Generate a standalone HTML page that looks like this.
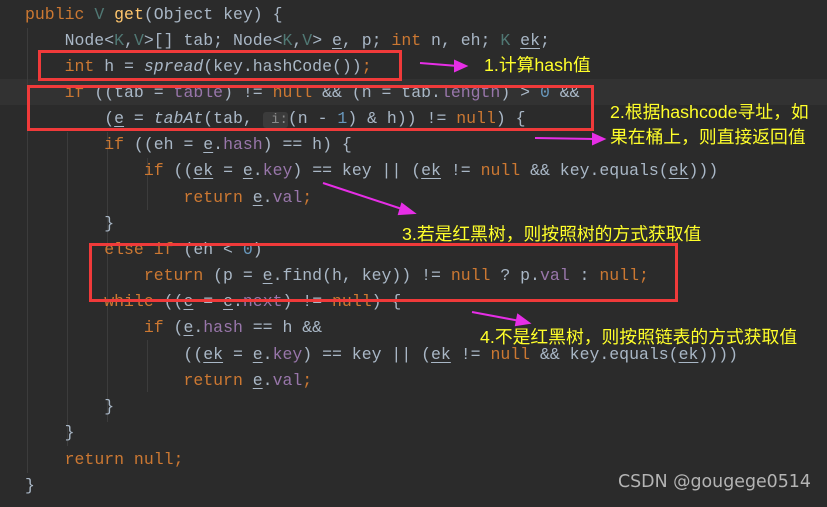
<!DOCTYPE html>
<html><head><meta charset="utf-8"><style>
body{margin:0;width:827px;height:507px;background:#2b2b2b;overflow:hidden;position:relative;font-family:"Liberation Mono",monospace}
.l{position:absolute;left:25px;height:26px;line-height:26px;font-size:16.5px;color:#a9b7c6;white-space:pre}
.k{color:#cc7832}.f{color:#9876aa}.n{color:#6897bb}.m{color:#ffc66d}.i{font-style:italic}.t{color:#507874}
u{text-decoration:underline;text-underline-offset:3px}
.g{position:absolute;width:1px;background:#3c3c3c}
.box{position:absolute;border:3px solid #f03a3a;box-sizing:border-box}
.a{position:absolute;color:#ffff2a;font-family:"Liberation Sans","Noto Sans CJK SC",sans-serif;font-size:17.8px;white-space:nowrap}
.hl{position:absolute;left:0;right:0;top:79px;height:26px;background:#323232}
.hint{background:#3b3b3b;color:#8a8a8a;font-size:14px;border-radius:3px}
</style></head><body>
<div class="hl"></div>
<div class="g" style="left:27px;top:28px;height:445px"></div>
<div class="g" style="left:67px;top:132px;height:314px"></div>
<div class="g" style="left:107px;top:132px;height:290px"></div>
<div class="g" style="left:147px;top:158px;height:52px"></div>
<div class="g" style="left:147px;top:340px;height:52px"></div>
<div class="l" style="top:2px"><span class="k">public</span> <span class="t">V</span> <span class="m">get</span>(Object key) {</div>
<div class="l" style="top:28px">    Node&lt;<span class="t">K</span>,<span class="t">V</span>&gt;[] tab; Node&lt;<span class="t">K</span>,<span class="t">V</span>&gt; <u>e</u>, p; <span class="k">int</span> n, eh; <span class="t">K</span> <u>ek</u>;</div>
<div class="l" style="top:54px">    <span class="k">int</span> h = <span class="i">spread</span>(key.hashCode())<span class="k">;</span></div>
<div class="l" style="top:80px">    <span class="k">if</span> ((tab = <span class="f">table</span>) != <span class="k">null</span> &amp;&amp; (n = tab.<span class="f">length</span>) &gt; <span class="n">0</span> &amp;&amp;</div>
<div class="l" style="top:106px">        (<u>e</u> = <span class="i">tabAt</span>(tab, <span class="hint"> i:</span>(n - <span class="n">1</span>) &amp; h)) != <span class="k">null</span>) {</div>
<div class="l" style="top:132px">        <span class="k">if</span> ((eh = <u>e</u>.<span class="f">hash</span>) == h) {</div>
<div class="l" style="top:158px">            <span class="k">if</span> ((<u>ek</u> = <u>e</u>.<span class="f">key</span>) == key || (<u>ek</u> != <span class="k">null</span> &amp;&amp; key.equals(<u>ek</u>)))</div>
<div class="l" style="top:185px">                <span class="k">return</span> <u>e</u>.<span class="f">val</span><span class="k">;</span></div>
<div class="l" style="top:211px">        }</div>
<div class="l" style="top:237px">        <span class="k">else if</span> (eh &lt; <span class="n">0</span>)</div>
<div class="l" style="top:263px">            <span class="k">return</span> (p = <u>e</u>.find(h, key)) != <span class="k">null</span> ? p.<span class="f">val</span> : <span class="k">null;</span></div>
<div class="l" style="top:289px">        <span class="k">while</span> ((<u>e</u> = <u>e</u>.<span class="f">next</span>) != <span class="k">null</span>) {</div>
<div class="l" style="top:315px">            <span class="k">if</span> (<u>e</u>.<span class="f">hash</span> == h &amp;&amp;</div>
<div class="l" style="top:342px">                ((<u>ek</u> = <u>e</u>.<span class="f">key</span>) == key || (<u>ek</u> != <span class="k">null</span> &amp;&amp; key.equals(<u>ek</u>))))</div>
<div class="l" style="top:368px">                <span class="k">return</span> <u>e</u>.<span class="f">val</span><span class="k">;</span></div>
<div class="l" style="top:394px">        }</div>
<div class="l" style="top:420px">    }</div>
<div class="l" style="top:447px">    <span class="k">return null;</span></div>
<div class="l" style="top:473px">}</div>
<div class="box" style="left:38px;top:50px;width:364px;height:31px"></div>
<div class="box" style="left:27px;top:85px;width:567px;height:46px"></div>
<div class="box" style="left:89px;top:243px;width:589px;height:59px"></div>
<svg style="position:absolute;left:0;top:0" width="827" height="507">
<g stroke="#e62ee6" stroke-width="2" fill="#e62ee6">
<line x1="420" y1="63" x2="458" y2="66"/><polygon points="466,66 455,61 455,71"/>
<line x1="535" y1="138" x2="595" y2="139"/><polygon points="604,139 593,134 593,144"/>
<line x1="323" y1="183" x2="405" y2="210"/><polygon points="414,213 402,204 399,214"/>
<line x1="472" y1="312" x2="520" y2="321"/><polygon points="529,323 518,315 516,325"/>
</g></svg>
<div class="a" style="left:484px;top:51px">1.计算hash值</div>
<div class="a" style="left:610px;top:98px">2.根据hashcode寻址，如</div>
<div class="a" style="left:610px;top:123px">果在桶上，则直接返回值</div>
<div class="a" style="left:402px;top:220px">3.若是红黑树，则按照树的方式获取值</div>
<div class="a" style="left:480px;top:323px">4.不是红黑树，则按照链表的方式获取值</div>
<div style="position:absolute;left:618px;top:472px;color:#b4b4b4;font-family:'DejaVu Sans','Liberation Sans',sans-serif;font-size:17.4px">CSDN @gougege0514</div>
</body></html>
